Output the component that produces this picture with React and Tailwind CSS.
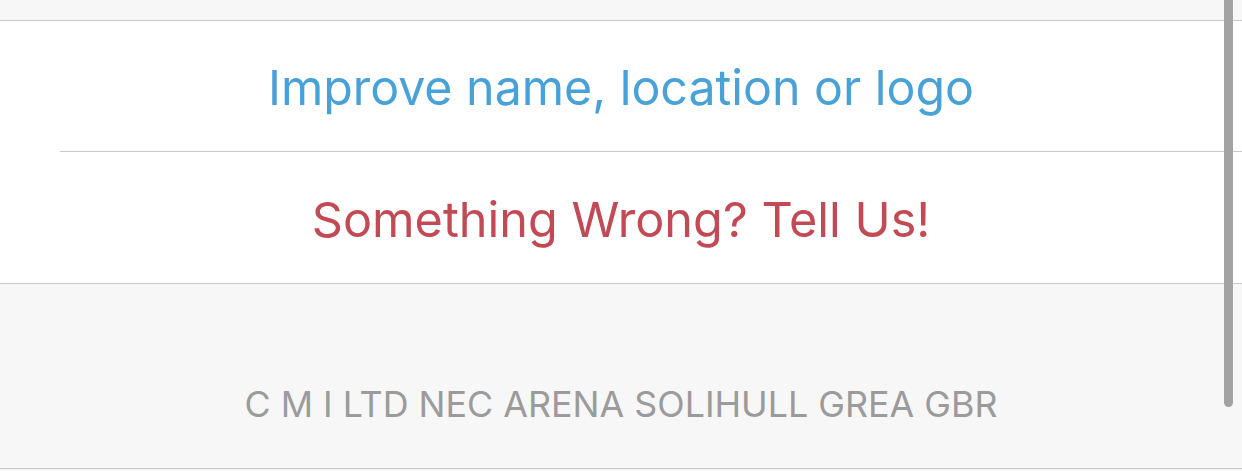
export default function App() {
  return (
    <div className="relative h-[471px] w-[1242px] overflow-hidden bg-[#f7f7f7]" style={{ fontFamily: 'Inter, "Noto Sans", sans-serif' }}>
      <div className="h-5" />
      <div className="border-y border-[#c8c7cc] bg-white">
        <button className="flex h-[130px] w-full items-center justify-center pt-[5px] text-[48.3px] text-[#48a2d8]">
          Improve name, location or logo
        </button>
        <div className="ml-[60px] border-t border-[#c8c7cc]" />
        <button className="flex h-[131px] w-full items-center justify-center pt-[5px] text-[48.6px] text-[#c24a55]">
          Something Wrong? Tell Us!
        </button>
      </div>
      <div className="flex h-[185px] items-end justify-center border-b border-[#c8c7cc] pb-[45px]">
        <p className="text-[35.8px] leading-none text-[#9b9b9b]">C M I LTD NEC ARENA SOLIHULL GREA GBR</p>
      </div>
      <div className="absolute right-[9px] top-0 h-[407px] w-[9px] rounded-b-full bg-[#a3a3a3]" />
    </div>
  );
}
